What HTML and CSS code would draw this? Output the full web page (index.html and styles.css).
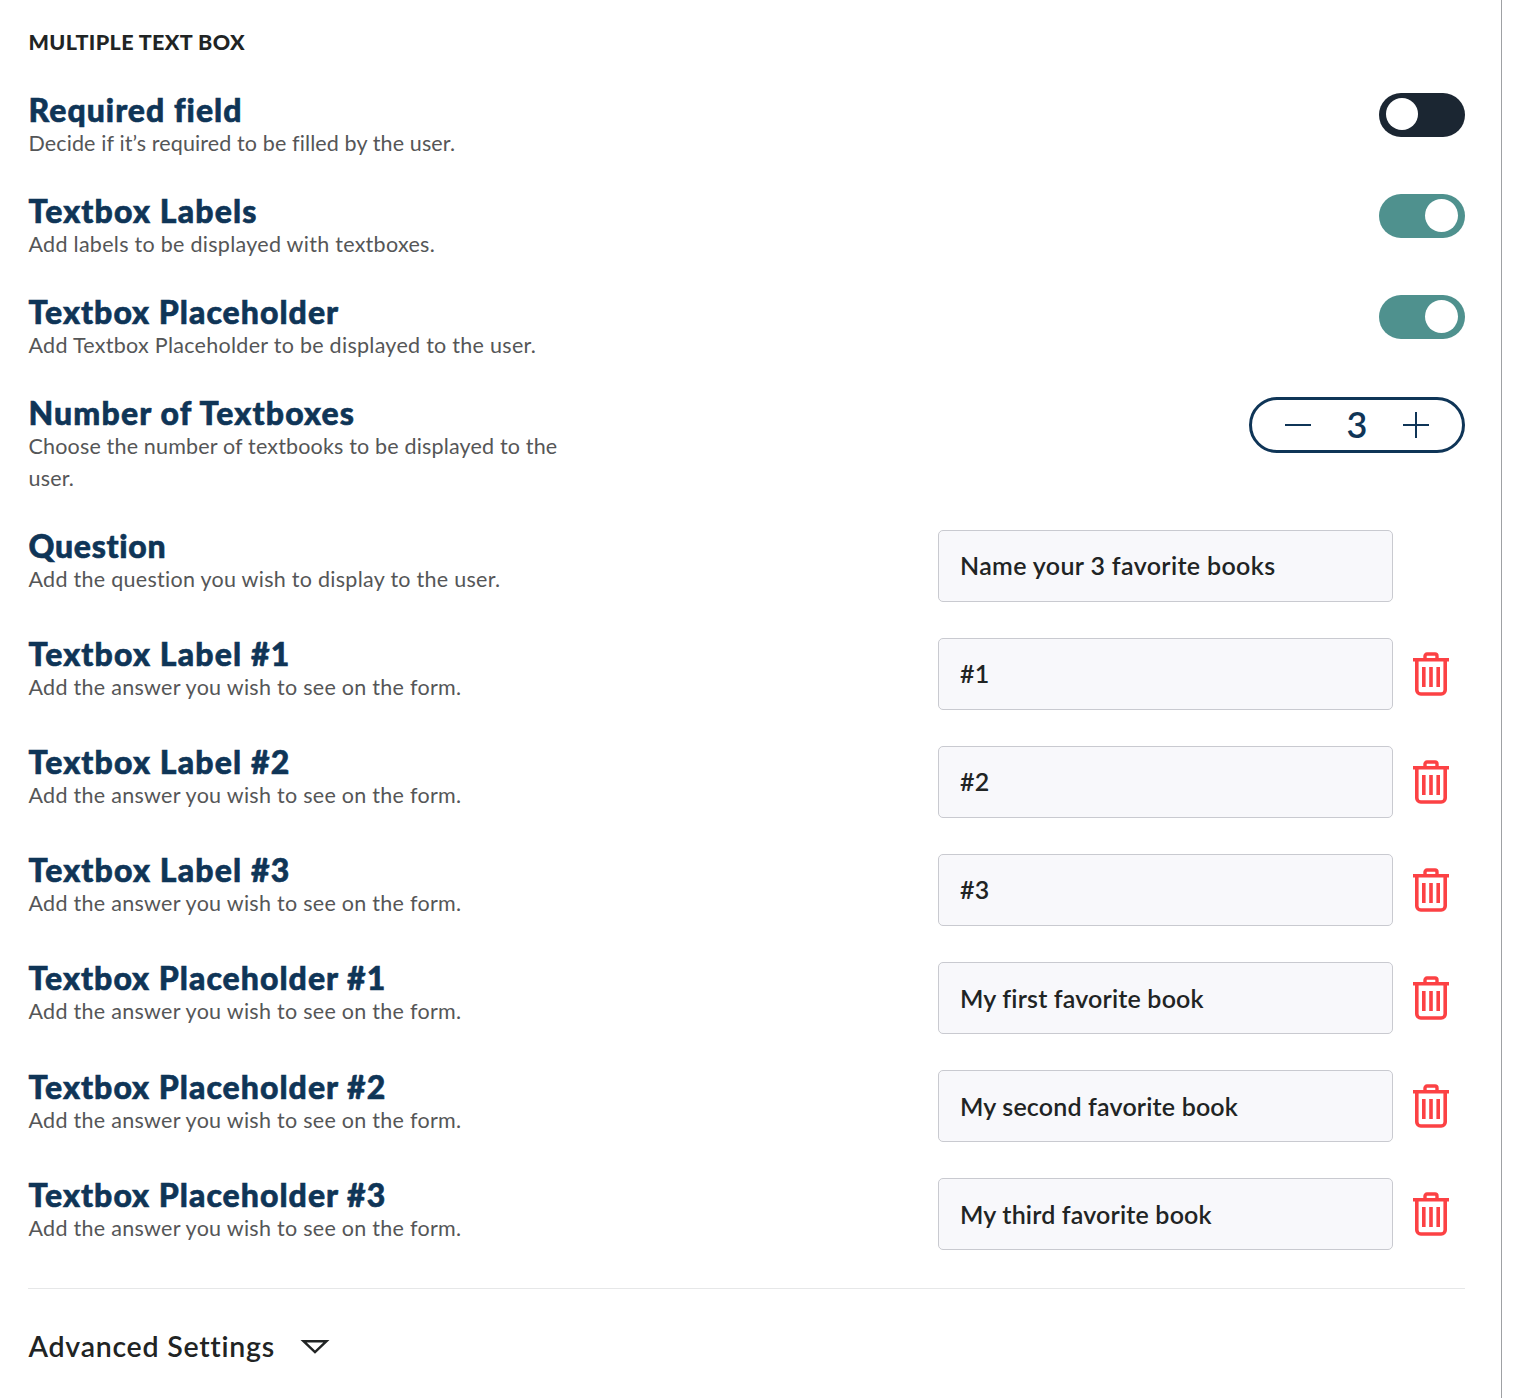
FILE: index.html
```
<!DOCTYPE html>
<html lang="en">
<head>
<meta charset="utf-8">
<title>Multiple Text Box</title>
<link rel="stylesheet" href="styles.css">
</head>
<body>
<svg width="0" height="0" class="defs">
  <symbol id="trash" viewBox="0 0 36 44">
    <path d="M12 6V4a2 2 0 0 1 2-2h8a2 2 0 0 1 2 2v2" fill="none" stroke="currentColor" stroke-width="3.4"/>
    <path d="M0 7.8h36M10.8 15v20M18 15v20M25.200 15v20" fill="none" stroke="currentColor" stroke-width="3.6"/>
    <path d="M3.800 8v30a4 4 0 0 0 4 4h20.400a4 4 0 0 0 4-4V8" fill="none" stroke="currentColor" stroke-width="3.6"/>
  </symbol>
</svg>
<main class="panel">
  <h1 class="heading">MULTIPLE TEXT BOX</h1>
  <section class="options">
    <div class="row">
      <div class="copy"><h2>Required field</h2><p class="tight">Decide if it’s required to be filled by the user.</p></div>
      <button class="toggle" aria-label="Required field"><i></i></button>
    </div>
    <div class="row">
      <div class="copy"><h2 class="wide">Textbox Labels</h2><p>Add labels to be displayed with textboxes.</p></div>
      <button class="toggle on" aria-label="Textbox Labels"><i></i></button>
    </div>
    <div class="row">
      <div class="copy"><h2>Textbox Placeholder</h2><p>Add Textbox Placeholder to be displayed to the user.</p></div>
      <button class="toggle on" aria-label="Textbox Placeholder"><i></i></button>
    </div>
    <div class="row">
      <div class="copy"><h2 class="wide">Number of Textboxes</h2><p class="snug">Choose the number of textbooks to be displayed to the<br>user.</p></div>
      <div class="stepper">
        <svg width="26" height="26" viewBox="0 0 26 26"><path d="M0 13h26"/></svg>
        <b>3</b>
        <svg width="26" height="26" viewBox="0 0 26 26"><path d="M0 13h26M13 0v26"/></svg>
      </div>
    </div>
  </section>
  <section class="fields">
    <div class="row">
      <div class="copy"><h2 class="narrow">Question</h2><p>Add the question you wish to display to the user.</p></div>
      <div class="input roomy">Name your 3 favorite books</div><div class="slot"></div>
    </div>
    <div class="row">
      <div class="copy"><h2 class="wide">Textbox Label #1</h2><p>Add the answer you wish to see on the form.</p></div>
      <div class="input roomy">#1</div><div class="slot"><svg class="trash"><use href="#trash"/></svg></div>
    </div>
    <div class="row">
      <div class="copy"><h2 class="wide">Textbox Label #2</h2><p>Add the answer you wish to see on the form.</p></div>
      <div class="input roomy">#2</div><div class="slot"><svg class="trash"><use href="#trash"/></svg></div>
    </div>
    <div class="row">
      <div class="copy"><h2 class="wide">Textbox Label #3</h2><p>Add the answer you wish to see on the form.</p></div>
      <div class="input roomy">#3</div><div class="slot"><svg class="trash"><use href="#trash"/></svg></div>
    </div>
    <div class="row">
      <div class="copy"><h2>Textbox Placeholder #1</h2><p>Add the answer you wish to see on the form.</p></div>
      <div class="input">My first favorite book</div><div class="slot"><svg class="trash"><use href="#trash"/></svg></div>
    </div>
    <div class="row">
      <div class="copy"><h2>Textbox Placeholder #2</h2><p>Add the answer you wish to see on the form.</p></div>
      <div class="input">My second favorite book</div><div class="slot"><svg class="trash"><use href="#trash"/></svg></div>
    </div>
    <div class="row">
      <div class="copy"><h2>Textbox Placeholder #3</h2><p>Add the answer you wish to see on the form.</p></div>
      <div class="input">My third favorite book</div><div class="slot"><svg class="trash"><use href="#trash"/></svg></div>
    </div>
  </section>
  <footer class="advanced"><span>Advanced Settings</span>
    <svg width="30" height="18" viewBox="0 0 30 18"><path d="M3.500 3.200h23L15 14.200z"/></svg>
  </footer>
</main>
</body>
</html>
```
FILE: styles.css
```
* { box-sizing: border-box; }
body { margin: 0; background: #fff; color: #212424; font-family: Lato, "Open Sans", sans-serif; }
.defs { display: block; height: 0; }
.panel { width: 1502px; height: 1398px; padding: 26px 36px 0 28px; border-right: 1px solid #9fa1a4; }
.heading { margin: 0; height: 67.300px; padding-left: 0.500px; font-size: 21.5px; line-height: 32px; font-weight: 900; letter-spacing: 0.380px; }
.row { display: flex; align-items: flex-start; }
.copy { flex: 1; margin-top: -0.800px; padding: 0 0 0.800px 0.500px; }
.copy h2 { margin: 0; font-size: 32px; line-height: 34px; font-weight: 900; letter-spacing: 1.020px; color: #0f3557; -webkit-text-stroke: 0.600px #0f3557; }
.copy h2.wide { letter-spacing: 1.150px; }
.copy h2.narrow { letter-spacing: 0.700px; }
.copy p { margin: 0; font-size: 21.500px; line-height: 32px; letter-spacing: 0.280px; color: #555657; }
.copy p.snug { letter-spacing: 0.170px; }
.copy p.tight { letter-spacing: 0.120px; }
.options { display: flex; flex-direction: column; gap: 35.100px; }
.toggle { width: 86px; height: 44px; padding: 5px 7px; border: 0; border-radius: 22px; background: #1b2632; display: flex; }
.toggle i { width: 32px; height: 32px; border-radius: 50%; background: #fff; }
.toggle.on { background: #4f918e; justify-content: flex-end; }
.toggle.on i { width: 33px; height: 33px; }
.stepper { width: 216px; height: 56px; border: 3px solid #0f3557; border-radius: 28px; display: flex; align-items: center; justify-content: space-between; padding: 0 32px; color: #0f3557; }
.stepper { padding: 0 32.500px; }
.stepper path { stroke: #0f3557; stroke-width: 2; }
.stepper b { font-size: 36px; line-height: 50px; font-weight: 600; padding-bottom: 2px; }
.fields { display: flex; flex-direction: column; gap: 36.100px; margin-top: 35.300px; padding-bottom: 38px; border-bottom: 1px solid #e6e7e8; }
.input { width: 455px; height: 72px; border: 1px solid #c9cad0; border-radius: 5px; background: #f8f8fb; display: flex; align-items: center; padding: 0 21px 1.500px; font-size: 25px; font-weight: 600; letter-spacing: 0.170px; }
.input.roomy { letter-spacing: 0.350px; }
.slot { width: 72px; height: 72px; padding: 14px 0 0 20px; }
.trash { display: block; width: 36px; height: 44px; color: #fc4144; }
.advanced { display: flex; align-items: center; gap: 25px; height: 116px; padding-left: 0.500px; font-size: 28.500px; font-weight: 600; letter-spacing: 0.750px; }
.advanced span { padding-bottom: 2px; }
.advanced path { fill: none; stroke: #212424; stroke-width: 2.400; }
```
